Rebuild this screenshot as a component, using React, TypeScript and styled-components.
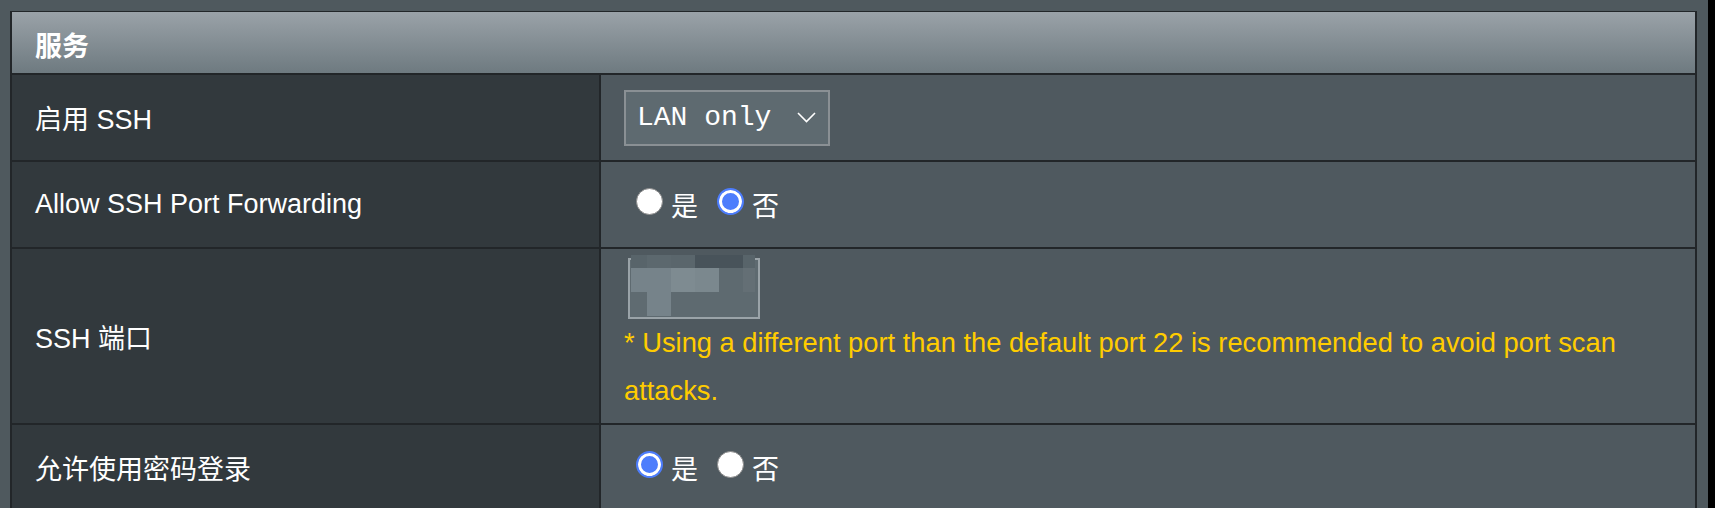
import React from "react";
import styled, { createGlobalStyle } from "styled-components";

const GlobalStyle = createGlobalStyle`
  html, body {
    margin: 0;
    padding: 0;
    background: #4f595e;
  }
  body {
    font-family: "Liberation Sans", "Noto Sans CJK SC", sans-serif;
  }
`;

const Page = styled.div`
  display: flex;
  height: 508px;
  overflow: hidden;
`;

const Main = styled.main`
  flex: 1;
  padding: 11px 11px 0 10px;
  background: #4f595e;
`;

const EdgeStrip = styled.div`
  width: 7px;
  background: #000;
`;

const Table = styled.section`
  display: grid;
  grid-template-columns: 587px 1fr;
  gap: 2px;
  padding: 1px 2px 0 2px;
  background: #222629;
`;

const Header = styled.div`
  grid-column: 1 / -1;
  height: 61px;
  box-sizing: border-box;
  display: flex;
  align-items: center;
  padding: 4px 0 0 23px;
  background: linear-gradient(#9aa2a8, #6e7a80);
  color: #fff;
  font-weight: bold;
  font-size: 27px;
`;

const LabelCell = styled.div`
  background: #32393d;
  color: #fff;
  font-size: 27px;
  display: flex;
  align-items: center;
  padding-left: 23px;
`;

const ValueCell = styled.div`
  background: #4f595f;
  min-height: 85px;
  box-sizing: border-box;
  display: flex;
  align-items: center;
  padding: 0 24px 0 23px;
`;

const PortCell = styled(ValueCell)`
  flex-direction: column;
  align-items: flex-start;
  padding: 9px 24px 8px 23px;
`;

const SelectBox = styled.div`
  width: 206px;
  height: 56px;
  box-sizing: border-box;
  border: 2px solid #8a9094;
  background: #5e6a70;
  display: flex;
  align-items: center;
  justify-content: space-between;
  padding: 0 12px 0 11px;
  color: #fff;
  font-family: "Liberation Mono", monospace;
  font-size: 28px;
`;

const RadioGroup = styled.div`
  display: flex;
  align-items: center;
  gap: 19px;
  padding-left: 12px;
`;

const Option = styled.label`
  display: inline-flex;
  align-items: center;
  gap: 8px;
  color: #fff;
  font-size: 27px;
`;

const Radio = styled.span<{ $checked?: boolean }>`
  width: 27px;
  height: 27px;
  box-sizing: border-box;
  border-radius: 50%;
  margin-bottom: 7px;
  flex: none;
  background: ${(p) => (p.$checked ? "#4d7dfc" : "#fff")};
  border: ${(p) => (p.$checked ? "2px solid #4d7dfc" : "1px solid #8a8a8a")};
  box-shadow: ${(p) => (p.$checked ? "inset 0 0 0 3px #fff" : "none")};
`;

const InputWrap = styled.div`
  position: relative;
  width: 132px;
  height: 61px;
  box-sizing: border-box;
  margin-left: 4px;
  border: 2px solid #9aa3a8;
  background: #5e6a70;
`;

const Mosaic = styled.div`
  position: absolute;
  top: -5px;
  left: 1px;
  display: grid;
  grid-template-columns: 16px 24px 24px 24px 24px 12px;
  grid-template-rows: 13px 24px 24px;
`;

const Tile = styled.div<{ $c: string }>`
  background: ${(p) => p.$c};
`;

const Hint = styled.p`
  margin: 0;
  color: #ffcc00;
  font-size: 27.3px;
  line-height: 48px;
`;

const mosaicColors = [
  "#58646a", "#5c686e", "#5a666c", "#48535a", "#48535a", "#58646a",
  "#76838a", "#76838a", "#7e8b91", "#7b888e", "#5e6a70", "#646f75",
  "#5f6b71", "#76838a", "#5e6a70", "#5e6a70", "#5e6a70", "#5e6a70",
];

const Chevron = () => (
  <svg width="19" height="11" viewBox="0 0 19 11" fill="none">
    <polyline points="1,1 9.5,9.5 18,1" stroke="#fff" strokeWidth="1.6" />
  </svg>
);

const YesNo = ({ yes }: { yes: boolean }) => (
  <RadioGroup>
    <Option>
      <Radio $checked={yes} />
      是
    </Option>
    <Option>
      <Radio $checked={!yes} />
      否
    </Option>
  </RadioGroup>
);

export default function App() {
  return (
    <>
      <GlobalStyle />
      <Page>
        <Main>
          <Table>
            <Header>服务</Header>

            <LabelCell>启用 SSH</LabelCell>
            <ValueCell>
              <SelectBox>
                <span>LAN only</span>
                <Chevron />
              </SelectBox>
            </ValueCell>

            <LabelCell>Allow SSH Port Forwarding</LabelCell>
            <ValueCell>
              <YesNo yes={false} />
            </ValueCell>

            <LabelCell>SSH 端口</LabelCell>
            <PortCell>
              <InputWrap>
                <Mosaic>
                  {mosaicColors.map((c, i) => (
                    <Tile key={i} $c={c} />
                  ))}
                </Mosaic>
              </InputWrap>
              <Hint>
                * Using a different port than the default port 22 is recommended to avoid port scan attacks.
              </Hint>
            </PortCell>

            <LabelCell>允许使用密码登录</LabelCell>
            <ValueCell>
              <YesNo yes={true} />
            </ValueCell>
          </Table>
        </Main>
        <EdgeStrip />
      </Page>
    </>
  );
}
